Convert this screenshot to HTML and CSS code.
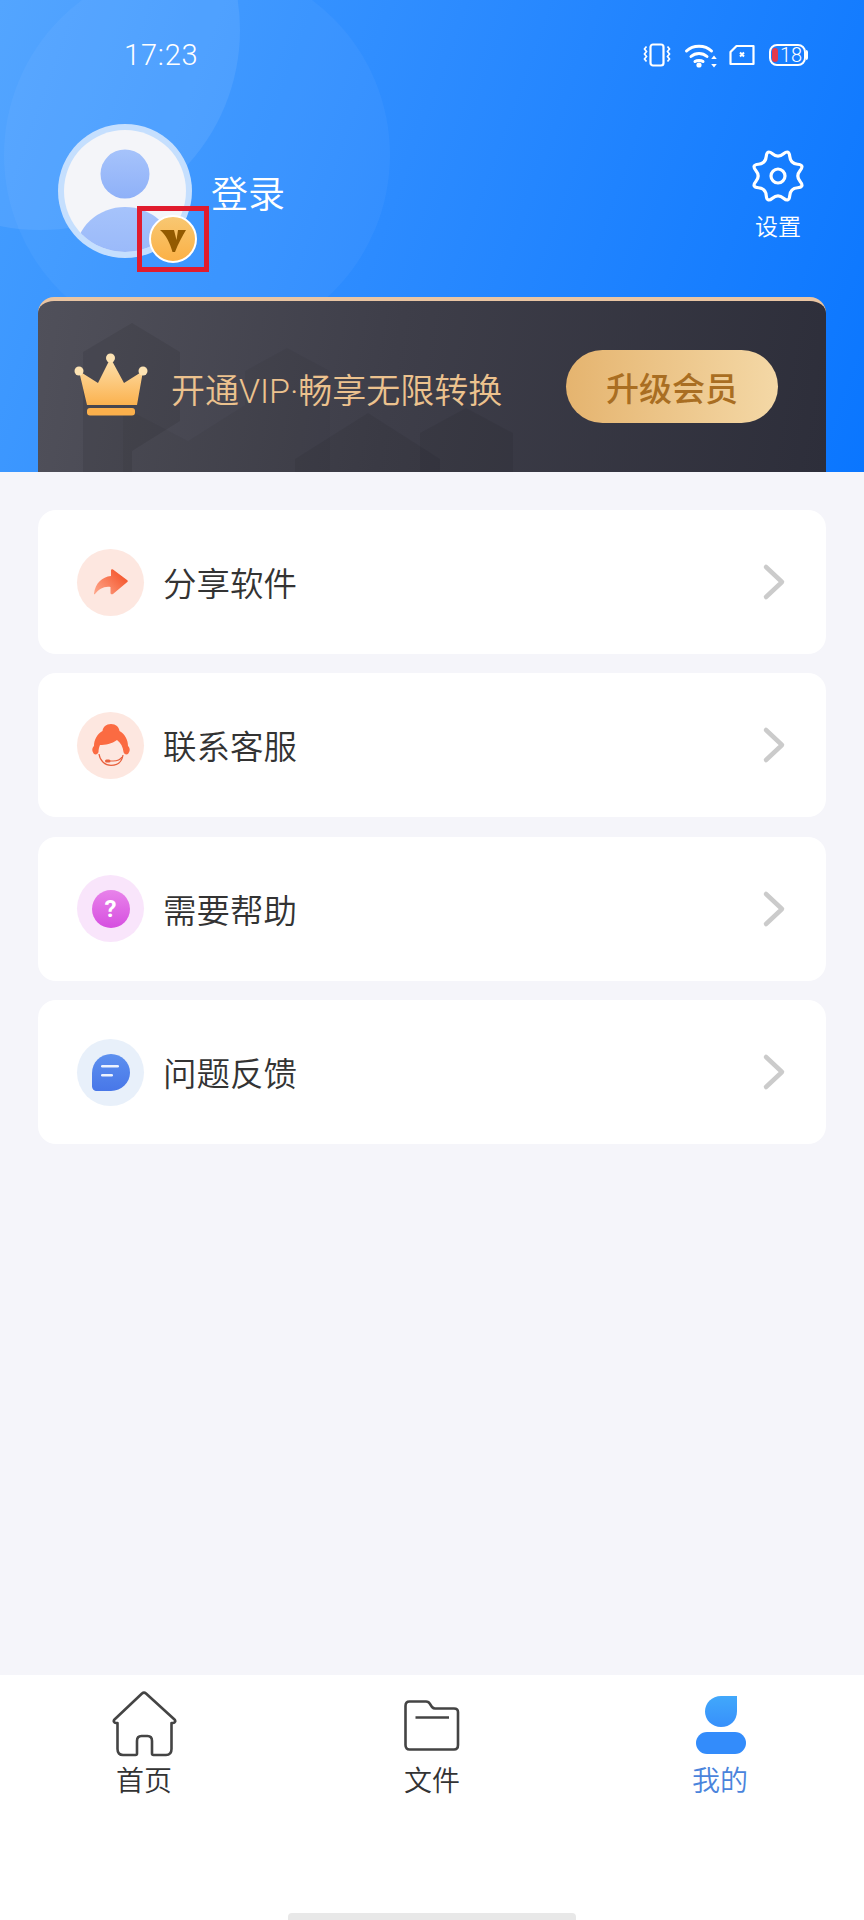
FILE: index.html

```html
<!DOCTYPE html>
<html lang="zh-CN">
<head>
  <meta charset="UTF-8" />
  <meta name="viewport" content="width=device-width, initial-scale=1.0" />
  <title>我的</title>
  <link rel="stylesheet" href="styles.css">
</head>
<body>
  <div class="page">
    <header class="top">
      <div class="circle circle-big"></div>
      <div class="circle circle-small"></div>

      <div class="status">
        <span class="time">17:23</span>
        <div class="status-icons">
          <svg class="icon-vib" width="30" height="24" viewBox="0 0 30 24" fill="none" stroke="#fff" stroke-width="2.200">
            <rect x="8.500" y="1.500" width="13" height="21" rx="2.500" />
            <path d="M4.500 3.500l-2 2.500 2 2.500-2 2.500 2 2.500-2 2.500 2 2.500M25.500 3.500l2 2.500-2 2.500 2 2.500-2 2.500 2 2.500-2 2.500" stroke-width="1.700" />
          </svg>
          <svg class="icon-wifi" width="34" height="26" viewBox="0 0 34 26" fill="none" stroke="#fff" stroke-width="3" stroke-linecap="round">
            <path d="M2.500 9C9 2.500 21 2.500 27.500 9M7 14.500C11.500 10.500 18.500 10.500 23 14.500M11 19.500C13 18 17 18 19 19.500" />
            <circle cx="15" cy="23" r="2.600" fill="#fff" stroke="none" />
            <path d="M30 13.500l2.800 3.500h-5.600zM30 25.500l2.800-3.500h-5.600z" fill="#fff" stroke="none" />
          </svg>
          <svg class="icon-sim" width="26" height="22" viewBox="0 0 26 22" fill="none" stroke="#fff" stroke-width="2.200">
            <path d="M7.500 2H24.500V20H1.500V8z" stroke-linejoin="round" />
            <path d="M11 8.500l4 4M15 8.500l-4 4" stroke-width="2" />
          </svg>
          <div class="battery">
            <span class="battery-low"></span>
            <span class="battery-num">18</span>
          </div>
        </div>
      </div>

      <div class="user-row">
        <div class="avatar-wrap">
          <svg class="avatar" width="134" height="134" viewBox="0 0 134 134">
            <defs>
              <linearGradient id="gHead" x1="0" y1="0" x2="0" y2="1">
                <stop offset="0" stop-color="#a6c3fb" />
                <stop offset="1" stop-color="#8fb1f8" />
              </linearGradient>
              <clipPath id="clipAvatar"><circle cx="67" cy="67" r="61" /></clipPath>
            </defs>
            <circle cx="67" cy="67" r="67" fill="#c5dffe" />
            <circle cx="67" cy="67" r="61" fill="#f4f5f9" />
            <circle cx="67" cy="50" r="24.500" fill="url(#gHead)" />
            <ellipse cx="67" cy="128" rx="49" ry="45" fill="url(#gHead)" clip-path="url(#clipAvatar)" />
          </svg>
          <div class="vip-mark">
            <svg class="vip-badge" width="48" height="48" viewBox="0 0 48 48">
              <defs>
                <linearGradient id="gBadge" x1="0" y1="0" x2="0" y2="1">
                  <stop offset="0" stop-color="#f8c873" />
                  <stop offset="1" stop-color="#fbb045" />
                </linearGradient>
              </defs>
              <circle cx="24" cy="24" r="23" fill="url(#gBadge)" stroke="#fff" stroke-width="2" />
              <path d="M11 15H25L27.500 25 29 15H37C33.500 21 29 29 26 37H23.500C21 28 17 20 11 15z" fill="#935a00" />
            </svg>
          </div>
        </div>
        <span class="login">登录</span>
        <div class="settings">
          <svg width="56" height="56" viewBox="0 0 56 56" fill="none" stroke="#fff" stroke-width="3.200" stroke-linejoin="round">
            <path d="M33.550 5.850Q39.100 1.200 39.750 8.400Q40.400 15.600 47.600 16.250Q54.800 16.900 50.150 22.450Q45.500 28 50.150 33.550Q54.800 39.100 47.600 39.750Q40.400 40.400 39.750 47.600Q39.100 54.800 33.550 50.150Q28 45.500 22.450 50.150Q16.900 54.800 16.250 47.600Q15.600 40.400 8.400 39.750Q1.200 39.100 5.850 33.550Q10.500 28 5.850 22.450Q1.200 16.900 8.400 16.250Q15.600 15.600 16.250 8.400Q16.900 1.200 22.450 5.850Q28 10.500 33.550 5.850z" />
            <circle cx="28" cy="28" r="7" />
          </svg>
          <span>设置</span>
        </div>
      </div>

      <div class="vip-card">
        <svg class="blocks" width="480" height="172" viewBox="0 0 480 172">
          <path d="M45 51 94 22 142 51V120L94 150V172H45z" fill="#000" opacity=".08" />
          <path d="M207 70 249 47 292 70V172H207z" fill="#000" opacity=".04" />
          <path d="M257 158 330 112 402 158V172H257z" fill="#000" opacity=".06" />
          <path d="M85 106 150 140 207 104V172H85z" fill="#000" opacity=".04" />
          <path d="M382 132 428 107 475 132V172H382z" fill="#000" opacity=".06" />
        </svg>
        <svg class="crown" width="76" height="64" viewBox="0 0 76 64">
          <defs>
            <linearGradient id="gCrown" x1="0" y1="0" x2="0" y2="1">
              <stop offset="0" stop-color="#fde1ae" />
              <stop offset="1" stop-color="#fbb24f" />
            </linearGradient>
          </defs>
          <path d="M6 18 25 30 37.500 5 51 30 70 18 64 52H14z" fill="url(#gCrown)" />
          <circle cx="6" cy="18" r="4.500" fill="#fde3b3" />
          <circle cx="37.500" cy="5" r="4.500" fill="#fde3b3" />
          <circle cx="70" cy="18" r="4.500" fill="#fde3b3" />
          <rect x="14" y="55" width="48" height="7.500" rx="3" fill="#fbb04c" />
        </svg>
        <span class="vip-text">开通VIP·畅享无限转换</span>
        <div class="vip-btn">升级会员</div>
      </div>
    </header>

    <main class="menu">
      <div class="row">
        <div class="row-icon bg-share">
          <svg width="34" height="26" viewBox="0 0 34 26">
            <defs>
              <linearGradient id="gOrange" x1="0" y1="1" x2="1" y2="0.300">
                <stop offset="0" stop-color="#ffa98e" />
                <stop offset="1" stop-color="#f4542a" />
              </linearGradient>
            </defs>
            <path d="M17 1.500c0-1 1-1.500 2-1L33 11c1 .8 1 1.500 0 2.300L19 25c-1 .7-2.500.3-2.500-1v-6C10 17 5 20 1 25c-.5.6-1.200.3-1-.5C1.500 14 8 8 17 7z" fill="url(#gOrange)" />
          </svg>
        </div>
        <span class="row-label">分享软件</span>
        <svg class="chev" width="24" height="38" viewBox="0 0 24 38" fill="none" stroke="#cbcbcb" stroke-width="4.500" stroke-linecap="round" stroke-linejoin="round"><path d="M4 4l16 15L4 34" /></svg>
      </div>

      <div class="row">
        <div class="row-icon bg-share">
          <svg width="38" height="42" viewBox="0 0 38 42">
            <path d="M19 0C24 0 27 3 27.500 7 33 10 36 16 36 22 38 24 38.500 27 36 30 34 31 32 30 31.500 28 31 23 29 19 25 16 20 20 13 21 8 21 7 23 6.500 26 6.500 28 6 30 4 31 2 30-.5 27 0 24 2 22 2 16 5 10 10.500 7 11 3 14 0 19 0z" fill="#fb6b42" />
            <path d="M7 30C8 37 13 41.300 19 41.300 25 41.300 30 38 31 31" fill="none" stroke="#e8603d" stroke-width="1.200" />
            <path d="M17 37H21C25 37 28.500 35.500 30 33" fill="none" stroke="#e8603d" stroke-width="1.200" />
            <rect x="13" y="35.500" width="5.500" height="3" rx="1.500" fill="#e8603d" />
          </svg>
        </div>
        <span class="row-label">联系客服</span>
        <svg class="chev" width="24" height="38" viewBox="0 0 24 38" fill="none" stroke="#cbcbcb" stroke-width="4.500" stroke-linecap="round" stroke-linejoin="round"><path d="M4 4l16 15L4 34" /></svg>
      </div>

      <div class="row">
        <div class="row-icon bg-help">
          <div class="help-dot">?</div>
        </div>
        <span class="row-label">需要帮助</span>
        <svg class="chev" width="24" height="38" viewBox="0 0 24 38" fill="none" stroke="#cbcbcb" stroke-width="4.500" stroke-linecap="round" stroke-linejoin="round"><path d="M4 4l16 15L4 34" /></svg>
      </div>

      <div class="row">
        <div class="row-icon bg-feedback">
          <svg width="38" height="37" viewBox="0 0 38 37">
            <defs>
              <linearGradient id="gBubble" x1="0" y1="0" x2="0" y2="1">
                <stop offset="0" stop-color="#5d90ef" />
                <stop offset="1" stop-color="#4877e8" />
              </linearGradient>
            </defs>
            <path d="M19 0c10.500 0 19 8.300 19 18.500S29.500 37 19 37H5c-3 0-5-2-5-5V19C0 8.500 8.500 0 19 0z" fill="url(#gBubble)" />
            <rect x="9" y="11" width="18" height="2.600" rx="1.300" fill="#fff" opacity=".9" />
            <rect x="9" y="20" width="12" height="2.600" rx="1.300" fill="#fff" opacity=".9" />
          </svg>
        </div>
        <span class="row-label">问题反馈</span>
        <svg class="chev" width="24" height="38" viewBox="0 0 24 38" fill="none" stroke="#cbcbcb" stroke-width="4.500" stroke-linecap="round" stroke-linejoin="round"><path d="M4 4l16 15L4 34" /></svg>
      </div>
    </main>

    <nav class="tabs">
      <div class="tab">
        <svg width="66" height="66" viewBox="0 0 66 66" fill="none" stroke="#444" stroke-width="2.600" stroke-linejoin="round">
          <path d="M31 2.500C32.200 1.500 33.800 1.500 35 2.500L63.500 28.500C65 30 64 32 62 32H60.500V58C60.500 62 58.500 64 55 64H42.500C41.500 64 41 63.500 41 62.500V50C41 47 39.500 45 36.500 45H30.500C27.500 45 26 47 26 50V62.500C26 63.500 25.500 64 24.500 64H12C8.500 64 6.500 62 6.500 58V32H5C3 32 2 30 3.500 28.500z" />
        </svg>
        <span>首页</span>
      </div>
      <div class="tab">
        <svg width="56" height="66" viewBox="0 0 56 66" fill="none" stroke="#444" stroke-width="2.600" stroke-linejoin="round">
          <path d="M1.500 15C1.500 12 3 10.500 5.500 10.500H22C24 10.500 25 11 26 13L28 16C29 17 30 17.500 31 17.500H50C52.500 17.500 54 19 54 21V54C54 57 52.500 58.500 50 58.500H5.500C3 58.500 1.500 57 1.500 54z" />
          <path d="M11.500 26.500H45" />
        </svg>
        <span>文件</span>
      </div>
      <div class="tab tab-active">
        <svg width="52" height="66" viewBox="0 0 52 66">
          <defs>
            <linearGradient id="gMe" x1="0" y1="0" x2="0" y2="1">
              <stop offset="0" stop-color="#41a8fb" />
              <stop offset="1" stop-color="#3790fb" />
            </linearGradient>
          </defs>
          <path d="M43 5V20C43 30 36 36 27 36 18 36 11 29 11 20.500 11 12 18 5 27 5z" fill="url(#gMe)" />
          <rect x="2" y="41" width="50" height="22" rx="11" fill="#338cfb" />
        </svg>
        <span>我的</span>
      </div>
    </nav>
    <div class="home-bar"></div>
  </div>
</body>
</html>
```

FILE: styles.css

```css
* {
  box-sizing: border-box;
}
body {
  margin: 0;
  font-family: "Noto Sans CJK SC", "Noto Sans", sans-serif;
  background: #f5f5fa;
  color: #333;
}
.page {
  width: 864px;
  height: 1920px;
  display: flex;
  flex-direction: column;
  overflow: hidden;
  position: relative;
}

/* top blue area */
.top {
  height: 472px;
  padding: 0 38px;
  position: relative;
  overflow: hidden;
  display: flex;
  flex-direction: column;
  background: linear-gradient(110deg, #459eff 0%, #2c8bff 45%, #0a76ff 100%);
  color: #fff;
}
.circle {
  position: absolute;
  border-radius: 50%;
}
.circle-big {
  width: 386px;
  height: 386px;
  left: 4px;
  top: -38px;
  background: rgba(255,255,255,0.04);
}
.circle-small {
  width: 400px;
  height: 400px;
  left: -160px;
  top: -170px;
  background: rgba(255,255,255,0.08);
}
.status {
  height: 110px;
  padding: 36px 0 0 86px;
  display: flex;
  justify-content: space-between;
  position: relative;
}
.time {
  font-family: Roboto, sans-serif;
  font-size: 29px;
  font-weight: 300;
  letter-spacing: .8px;
  line-height: 38px;
}
.status-icons {
  display: flex;
  align-items: center;
  height: 38px;
  margin-right: 20px;
}
.icon-wifi {
  margin-left: 12px;
}
.icon-sim {
  margin-left: 11px;
}
.battery {
  width: 37px;
  height: 22px;
  margin-left: 14px;
  border: 2px solid #fff;
  border-radius: 8px;
  display: flex;
  align-items: center;
  padding-left: 1px;
  position: relative;
  font-family: Roboto, sans-serif;
  font-size: 20px;
  font-weight: 300;
}
.battery:after {
  content: "";
  position: absolute;
  right: -4px;
  top: 4px;
  width: 2px;
  height: 10px;
  background: #fff;
  border-radius: 0 2px 2px 0;
}
.battery-low {
  width: 6px;
  height: 14px;
  background: #e23a4d;
  border-radius: 3px;
  flex-shrink: 0;
}
.battery-num {
  line-height: 18px;
  margin-left: 2px;
}
.user-row {
  height: 187px;
  padding-left: 20px;
  display: flex;
  align-items: flex-start;
  position: relative;
}
.avatar-wrap {
  width: 134px;
  height: 134px;
  margin-top: 14px;
  position: relative;
  flex-shrink: 0;
}
.avatar {
  display: block;
}
.vip-mark {
  position: absolute;
  left: 79px;
  top: 82px;
  width: 72px;
  height: 66px;
  border: 5px solid #e01c2e;
  display: flex;
  align-items: center;
  justify-content: center;
}
.login {
  font-size: 37px;
  font-weight: 350;
  line-height: 48px;
  margin: 58px 0 0 19px;
}
.settings {
  margin-left: auto;
  margin-right: 20px;
  margin-top: 38px;
  width: 56px;
  display: flex;
  flex-direction: column;
  align-items: center;
  font-size: 23px;
  font-weight: 350;
  line-height: 30px;
}
.settings svg {
  display: block;
  margin-bottom: 6px;
}
.settings span {
  white-space: nowrap;
}

/* vip card */
.vip-card {
  height: 175px;
  position: relative;
  overflow: hidden;
  display: flex;
  align-items: center;
  padding: 0 48px 0 35px;
  border-top: 4px solid #eac5a2;
  border-radius: 16px 16px 0 0;
  background: linear-gradient(100deg, #50505a 0%, #3e3e49 45%, #2d2e3a 100%);
}
.blocks {
  position: absolute;
  left: 0;
  top: 0;
}
.crown {
  position: relative;
  margin-top: -4px;
  flex-shrink: 0;
}
.vip-text {
  position: relative;
  margin: 8px 0 0 22px;
  font-family: Roboto, "Noto Sans CJK SC", sans-serif;
  font-size: 34px;
  font-weight: 350;
  line-height: 44px;
  color: #ecc28e;
  white-space: nowrap;
}
.vip-btn {
  position: relative;
  margin-left: auto;
  width: 212px;
  height: 73px;
  border-radius: 37px;
  flex-shrink: 0;
  display: flex;
  align-items: center;
  justify-content: center;
  font-size: 33px;
  font-weight: 500;
  color: #a96e22;
  background: linear-gradient(90deg, #e5b46f, #f4d8a6);
}

/* list */
.menu {
  flex: 1;
  padding: 38px 38px 0;
  display: flex;
  flex-direction: column;
  gap: 19.4px;
}
.row {
  height: 144px;
  background: #fff;
  border-radius: 18px;
  padding: 0 40px 0 39px;
  display: flex;
  align-items: center;
}
.row-icon {
  width: 67px;
  height: 67px;
  border-radius: 50%;
  display: flex;
  align-items: center;
  justify-content: center;
  flex-shrink: 0;
}
.bg-share {
  background: #fde7e0;
}
.bg-help {
  background: #f9e5fb;
}
.bg-feedback {
  background: #e8f0fa;
}
.help-dot {
  width: 38px;
  height: 38px;
  border-radius: 50%;
  background: linear-gradient(#e883ea, #d64fe0);
  color: #fff;
  font-family: Roboto, sans-serif;
  font-size: 24px;
  font-weight: 700;
  line-height: 38px;
  text-align: center;
}
.row-label {
  margin-left: 19px;
  font-size: 33.5px;
  font-weight: 350;
  line-height: 44px;
  color: #333;
}
.chev {
  margin-left: auto;
}

/* bottom tabs */
.tabs {
  height: 245px;
  background: #fff;
  padding-top: 16px;
  display: flex;
}
.tab {
  flex: 1;
  display: flex;
  flex-direction: column;
  align-items: center;
  font-size: 28px;
  font-weight: 350;
  line-height: 36px;
  color: #333;
}
.tab svg {
  display: block;
  margin-bottom: 4px;
}
.tab-active {
  color: #4a84dc;
}
.home-bar {
  position: absolute;
  left: 288px;
  bottom: 0;
  width: 288px;
  height: 7px;
  border-radius: 4px 4px 0 0;
  background: #e8e8e8;
}
```
